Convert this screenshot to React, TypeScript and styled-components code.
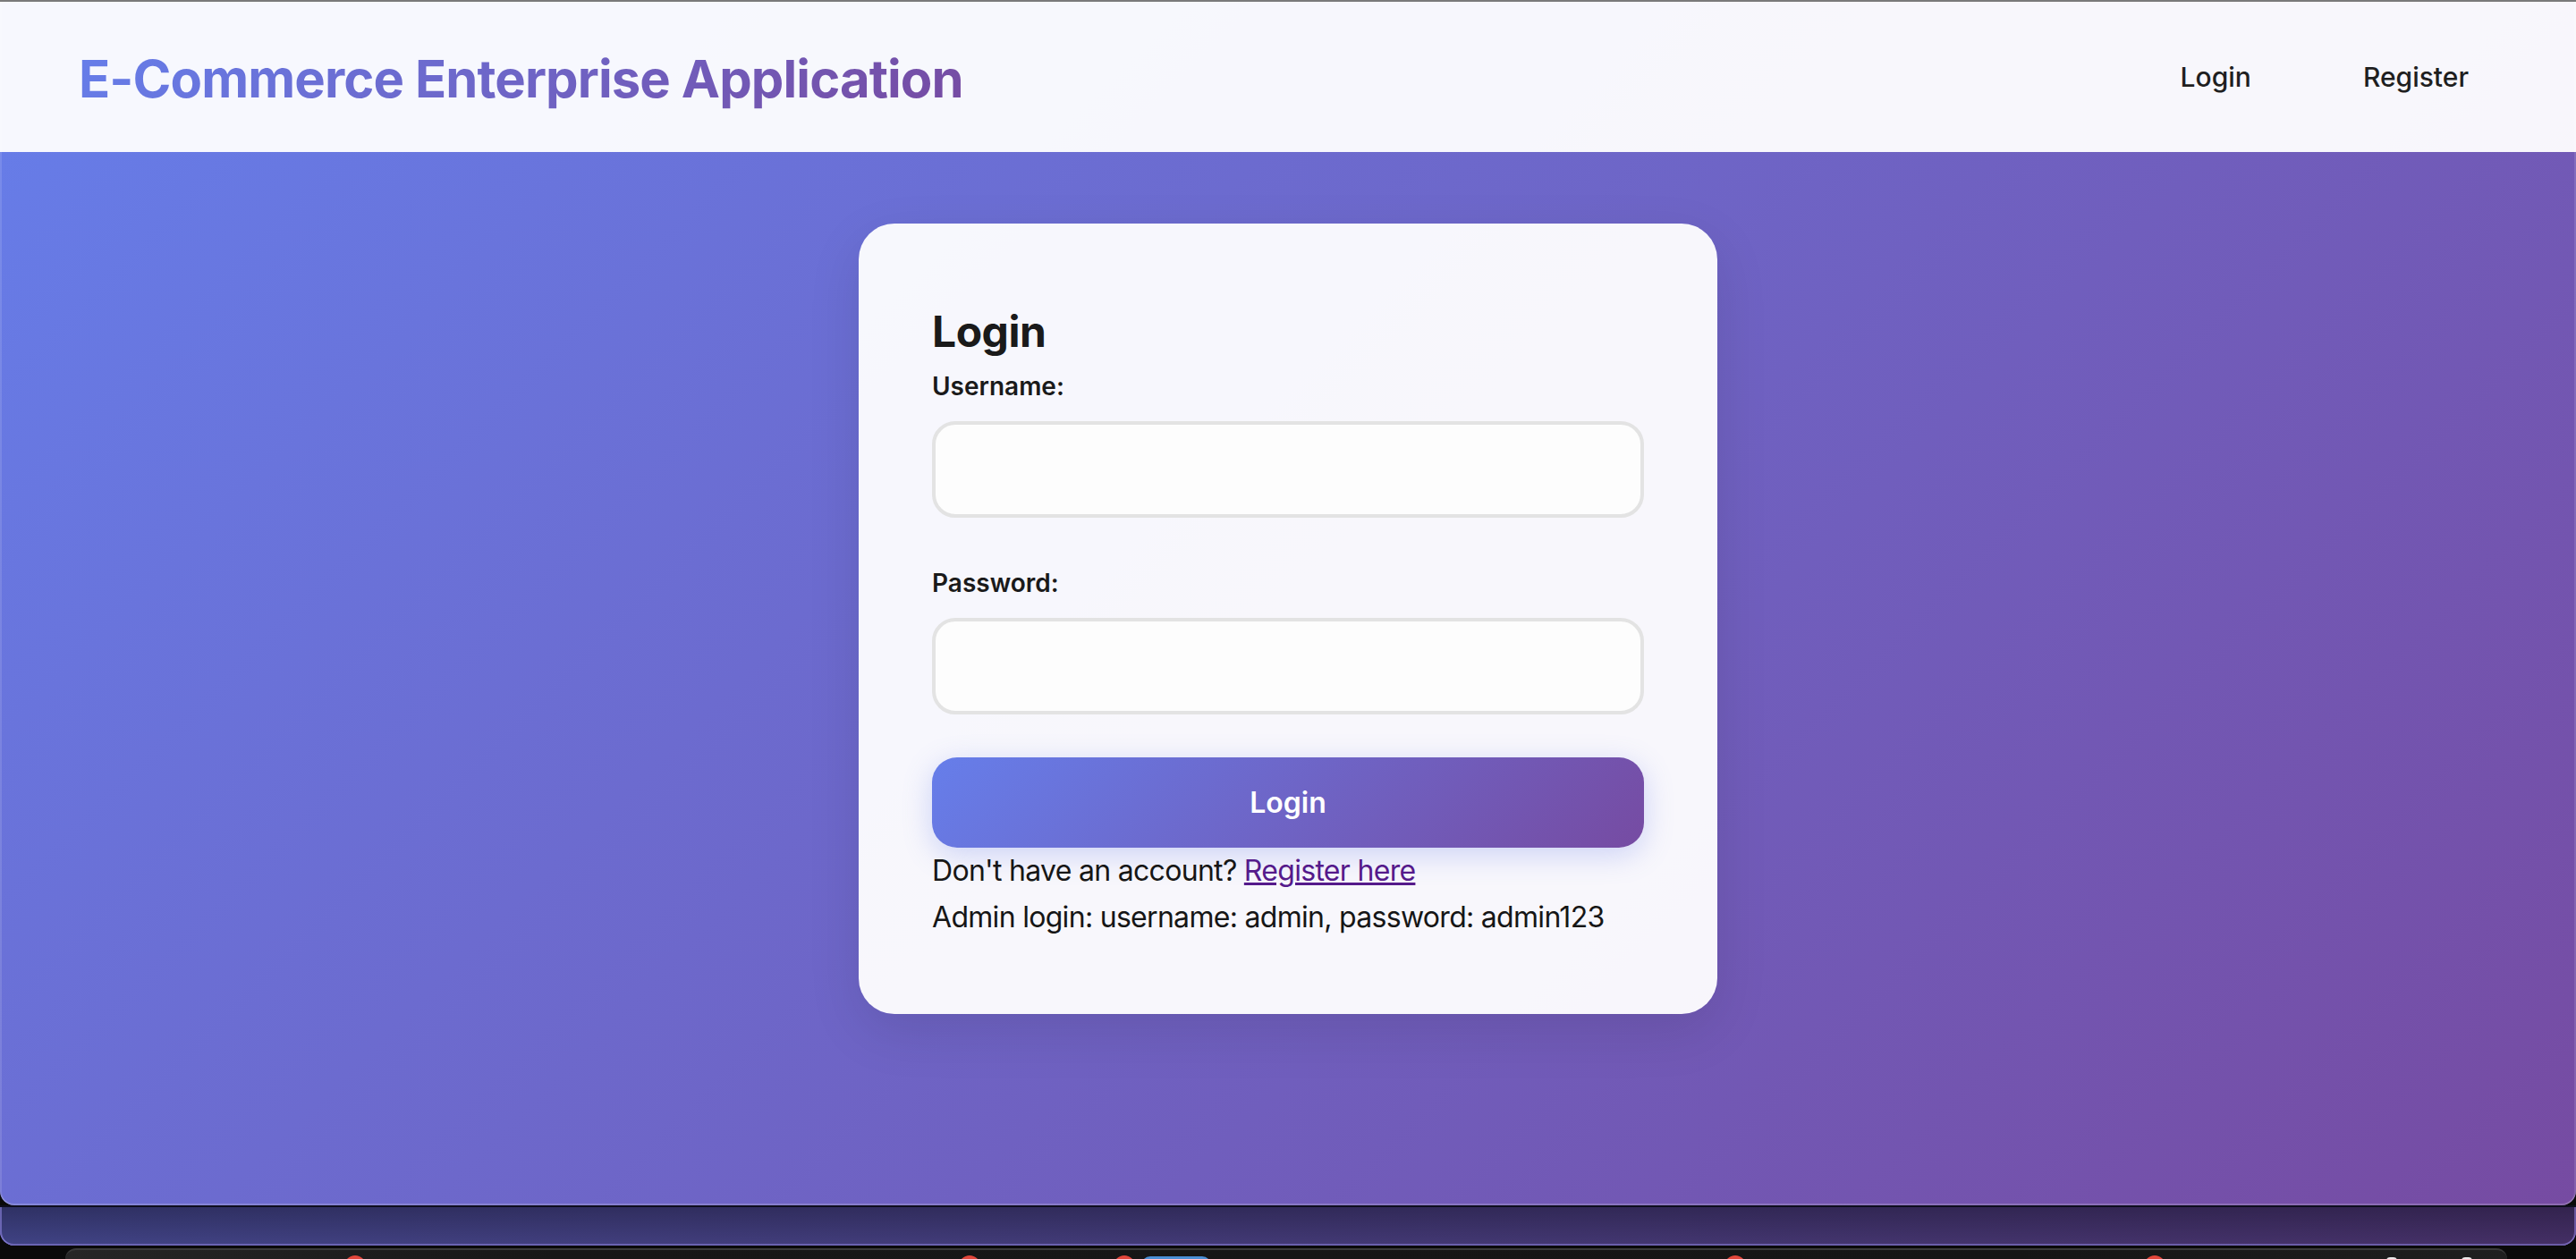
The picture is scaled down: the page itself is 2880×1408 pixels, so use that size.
import React from "react";
import styled, { createGlobalStyle } from "styled-components";

const GlobalStyle = createGlobalStyle`
  html, body { margin: 0; padding: 0; background: #0a0a0a; }
  body {
    font-family: Inter, "Noto Sans", "Liberation Sans", sans-serif;
    -webkit-font-smoothing: antialiased;
  }
  * { box-sizing: border-box; }
`;

const Screen = styled.div`
  width: 2880px;
  height: 1408px;
  overflow: hidden;
  display: flex;
  flex-direction: column;
  background: #0a0a0a;
`;

const TopEdge = styled.div`
  flex: none;
  height: 2px;
  background: #7a7a7a;
`;

const Window = styled.div`
  flex: none;
  height: 1346px;
  display: flex;
  flex-direction: column;
  background: linear-gradient(135deg, #667eea 0%, #764ba2 100%);
  border-radius: 0 0 16px 16px;
  overflow: hidden;
  box-shadow: inset 2px 0 0 rgba(255, 255, 255, 0.12),
    inset -2px 0 0 rgba(255, 255, 255, 0.12),
    inset 0 -2px 0 rgba(255, 255, 255, 0.18);
`;

const Header = styled.header`
  flex: none;
  height: 168px;
  display: flex;
  align-items: center;
  justify-content: space-between;
  padding: 0 88px;
  background: rgba(255, 255, 255, 0.95);
`;

const Brand = styled.h1`
  margin: 4px 0 0;
  font-size: 58px;
  font-weight: 700;
  letter-spacing: -0.9px;
  background: linear-gradient(135deg, #667eea 0%, #764ba2 100%);
  -webkit-background-clip: text;
  background-clip: text;
  color: transparent;
`;

const Nav = styled.nav`
  display: flex;
  gap: 61px;
`;

const NavLink = styled.a`
  padding: 0 32px;
  font-size: 30px;
  line-height: 36px;
  font-weight: 500;
  color: #1f1f1f;
  text-decoration: none;
`;

const Main = styled.main`
  flex: 1;
  display: flex;
  justify-content: center;
  align-items: flex-start;
  padding-top: 80px;
`;

const Card = styled.div`
  width: 960px;
  padding: 80px 82px 82px;
  background: rgba(255, 255, 255, 0.95);
  border-radius: 40px;
  box-shadow: 0 20px 60px rgba(0, 0, 0, 0.1);
`;

const Title = styled.h2`
  margin: 12px 0 0;
  font-size: 48px;
  line-height: 58px;
  font-weight: 700;
  letter-spacing: -0.5px;
  color: #1a1a1a;
`;

const Field = styled.div<{ $gap: number }>`
  display: flex;
  flex-direction: column;
  margin-top: ${(p) => p.$gap}px;
`;

const Label = styled.label`
  font-size: 28px;
  line-height: 34px;
  font-weight: 600;
  color: #1a1a1a;
`;

const Input = styled.input`
  margin-top: 22px;
  width: 100%;
  height: 108px;
  border: 4px solid #e3e3e3;
  border-radius: 26px;
  background: #fdfdfd;
  padding: 0 28px;
  font-size: 32px;
  font-family: inherit;
  outline: none;
`;

const SubmitButton = styled.button`
  margin-top: 48px;
  width: 100%;
  height: 101px;
  border: none;
  border-radius: 28px;
  background: linear-gradient(135deg, #667eea 0%, #764ba2 100%);
  color: #ffffff;
  font-family: inherit;
  font-size: 32px;
  font-weight: 600;
  box-shadow: 0 8px 32px rgba(102, 126, 234, 0.3);
  cursor: pointer;
`;

const Note = styled.p`
  margin: 0;
  font-size: 32px;
  line-height: 52px;
  letter-spacing: -0.7px;
  color: #161616;
`;

const TextLink = styled.a`
  color: #551a8b;
  text-decoration: underline;
`;

const BackWindow = styled.div`
  flex: none;
  height: 45px;
  border-top: 2px solid #0e0e1e;
  border-radius: 0 0 16px 16px;
  background: linear-gradient(180deg, rgba(0, 0, 12, 0.56), rgba(0, 0, 12, 0.4)),
    linear-gradient(90deg, #6b70d6 0%, #734fa2 100%);
  box-shadow: inset 2px 0 0 rgba(140, 130, 220, 0.6),
    inset -2px 0 0 rgba(140, 120, 210, 0.6),
    inset 0 -2px 0 rgba(140, 130, 220, 0.55);
`;

const DockArea = styled.div`
  flex: 1;
  padding: 3px 77px 0 73px;
  background: #0a0a0a;
  display: flex;
`;

const Dock = styled.div`
  position: relative;
  flex: 1;
  background: linear-gradient(90deg, #262626, #171717 20%, #151515 80%, #1f1f1f);
  border-top: 2px solid #3a3a3a;
  border-radius: 28px 28px 0 0;
`;

const Badge = styled.span`
  position: absolute;
  top: 6px;
  width: 24px;
  height: 24px;
  border-radius: 50%;
  background: #e2463b;
`;

const Tile = styled.span`
  position: absolute;
  top: 7px;
  width: 78px;
  height: 30px;
  border-radius: 10px;
  background: #4a8fd6;
`;

const Glint = styled.span`
  position: absolute;
  top: 8px;
  width: 12px;
  height: 10px;
  border-radius: 4px;
  background: #e8e8e8;
`;

const badgeCenters = [397, 1084, 1257, 1940, 2409];

export default function App() {
  return (
    <>
      <GlobalStyle />
      <Screen>
        <TopEdge />
        <Window>
          <Header>
            <Brand>E-Commerce Enterprise Application</Brand>
            <Nav>
              <NavLink href="#">Login</NavLink>
              <NavLink href="#">Register</NavLink>
            </Nav>
          </Header>
          <Main>
            <Card>
              <Title>Login</Title>
              <Field $gap={15}>
                <Label>Username:</Label>
                <Input type="text" />
              </Field>
              <Field $gap={56}>
                <Label>Password:</Label>
                <Input type="password" />
              </Field>
              <SubmitButton>Login</SubmitButton>
              <Note>
                Don't have an account? <TextLink href="#">Register here</TextLink>
              </Note>
              <Note>Admin login: username: admin, password: admin123</Note>
            </Card>
          </Main>
        </Window>
        <BackWindow />
        <DockArea>
          <Dock>
            {badgeCenters.map((x) => (
              <Badge key={x} style={{ left: x - 73 - 12 }} />
            ))}
            <Tile style={{ left: 1276 - 73 }} />
            <Glint style={{ left: 2668 - 73 }} />
            <Glint style={{ left: 2752 - 73 }} />
          </Dock>
        </DockArea>
      </Screen>
    </>
  );
}
